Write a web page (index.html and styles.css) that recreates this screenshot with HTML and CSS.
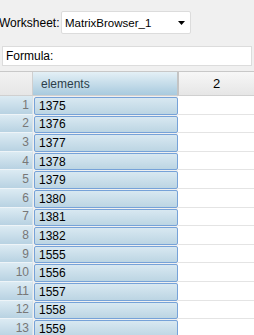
FILE: index.html
```html
<!DOCTYPE html>
<html lang="en">
<head>
    <meta charset="UTF-8">
    <title>Matrix Browser</title>
    <link rel="stylesheet" href="styles.css">
</head>
<body>

    <div class="toolbar">
        <span class="label">Worksheet:</span>
        <div class="select">
            <span>MatrixBrowser_1</span>
            <svg class="arrow" width="7" height="4" viewBox="0 0 7 4"><path d="M0 0h7L3.5 4z" fill="#000"/></svg>
        </div>
    </div>

    <div class="formula">Formula:</div>

    <!-- sheet grid -->
    <div class="sheet">
        <div class="head corner"></div>
        <div class="head col-sel">elements</div>
        <div class="head col">2</div>

        <div class="num">1</div><div class="cell"><span>1375</span></div><div class="empty"></div>
        <div class="num">2</div><div class="cell"><span>1376</span></div><div class="empty"></div>
        <div class="num">3</div><div class="cell"><span>1377</span></div><div class="empty"></div>
        <div class="num">4</div><div class="cell"><span>1378</span></div><div class="empty"></div>
        <div class="num">5</div><div class="cell"><span>1379</span></div><div class="empty"></div>
        <div class="num">6</div><div class="cell"><span>1380</span></div><div class="empty"></div>
        <div class="num">7</div><div class="cell"><span>1381</span></div><div class="empty"></div>
        <div class="num">8</div><div class="cell"><span>1382</span></div><div class="empty"></div>
        <div class="num">9</div><div class="cell"><span>1555</span></div><div class="empty"></div>
        <div class="num">10</div><div class="cell"><span>1556</span></div><div class="empty"></div>
        <div class="num">11</div><div class="cell"><span>1557</span></div><div class="empty"></div>
        <div class="num">12</div><div class="cell"><span>1558</span></div><div class="empty"></div>
        <div class="num">13</div><div class="cell"><span>1559</span></div><div class="empty"></div>
    </div>

</body>
</html>
```

FILE: styles.css
```css
body {
    margin: 0;
    background-color: #f0f0f0;
    font-family: "Liberation Sans", Arial, sans-serif;
    font-size: 12px;
    color: #000;
    overflow: hidden;
}

.toolbar {
    display: flex;
    align-items: center;
    padding-top: 11px;
    height: 23px;
}

.label {
    width: 62px;
    margin-left: -1px;
}

.select {
    width: 130px;
    height: 23px;
    box-sizing: border-box;
    background-color: #fff;
    border: 1px solid #dcdcdc;
    border-radius: 2px;
    display: flex;
    align-items: center;
    justify-content: space-between;
    padding: 0 5px 0 3px;
    font-size: 11.5px;
}

.formula {
    margin: 12px 2px 0 2px;
    height: 20px;
    box-sizing: border-box;
    background-color: #fff;
    border: 1px solid #dcdcdc;
    padding: 2px 3px;
}

/* Grid */
.sheet {
    margin-top: 5px;
    display: grid;
    grid-template-columns: 33px 145px 76px;
    grid-template-rows: 24px;
    grid-auto-rows: 18.6px;
    border-top: 1px solid #c8c8c8;
}

.head {
    display: flex;
    align-items: center;
    justify-content: center;
    box-sizing: border-box;
    border-bottom: 1px solid #d0d0d0;
}

.corner {
    background: linear-gradient(#f2f2f2, #e6e6e6);
    border-right: 1px solid #cfcfcf;
}

.col-sel {
    background: linear-gradient(#e4f0f6, #a8cade);
    color: #2c3e4a;
    justify-content: flex-start;
    padding-left: 8px;
    border-right: 1px solid #c4c4c4;
}

.col {
    background: linear-gradient(#f7f7f7, #e6e6e6);
    border-left: 1px solid #c4c4c4;
    font-size: 13px;
}

.num {
    background: linear-gradient(#dcebf3, #b8d2e2);
    color: #777;
    padding-right: 3px;
    border-bottom: 1px solid #eef4f8;
    border-right: 1px solid #d6e3ea;
    box-sizing: border-box;
    display: flex;
    align-items: center;
    justify-content: flex-end;
}

.cell {
    padding: 1px 0 0 1px;
    box-sizing: border-box;
}

.cell span {
    display: flex;
    align-items: center;
    height: 100%;
    box-sizing: border-box;
    background: linear-gradient(#d8e8f1, #bcd5e3);
    border: 1px solid #76a2d8;
    border-radius: 2px;
    padding-left: 4px;
}

.empty {
    background-color: #fff;
    border-bottom: 1px solid #e4e4e4;
}
```
